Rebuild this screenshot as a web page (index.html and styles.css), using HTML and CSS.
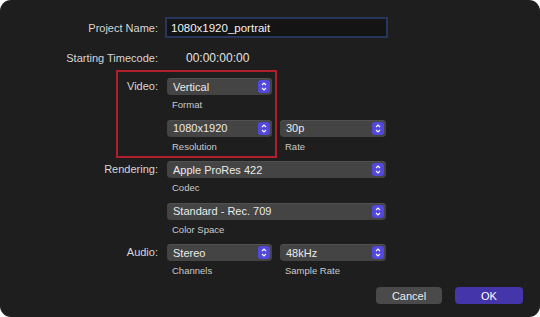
FILE: index.html
```html
<!DOCTYPE html>
<html lang="en">
<head>
    <meta charset="UTF-8">
    <meta name="viewport" content="width=device-width, initial-scale=1.0">
    <title>Project Settings</title>
    <link rel="stylesheet" href="styles.css">
</head>
<body>

<div class="dialog">
    <div class="row row-name">
        <label class="label">Project Name:</label>
        <input type="text" class="name-input" value="1080x1920_portrait">
    </div>

    <div class="row row-timecode">
        <span class="label">Starting Timecode:</span>
        <span class="timecode">00:00:00:00</span>
    </div>

    <div class="group">
        <span class="label">Video:</span>
        <div class="field">
            <div class="popup"><span>Vertical</span><span class="stepper"></span></div>
            <div class="sub">Format</div>
        </div>
    </div>

    <div class="group">
        <span class="label"></span>
        <div class="field">
            <div class="popup"><span>1080x1920</span><span class="stepper"></span></div>
            <div class="sub">Resolution</div>
        </div>
        <div class="field">
            <div class="popup"><span>30p</span><span class="stepper"></span></div>
            <div class="sub">Rate</div>
        </div>
    </div>

    <div class="group">
        <span class="label">Rendering:</span>
        <div class="field wide">
            <div class="popup"><span>Apple ProRes 422</span><span class="stepper"></span></div>
            <div class="sub">Codec</div>
        </div>
    </div>

    <div class="group">
        <span class="label"></span>
        <div class="field wide">
            <div class="popup"><span>Standard - Rec. 709</span><span class="stepper"></span></div>
            <div class="sub">Color Space</div>
        </div>
    </div>

    <div class="group">
        <span class="label">Audio:</span>
        <div class="field">
            <div class="popup"><span>Stereo</span><span class="stepper"></span></div>
            <div class="sub">Channels</div>
        </div>
        <div class="field">
            <div class="popup"><span>48kHz</span><span class="stepper"></span></div>
            <div class="sub">Sample Rate</div>
        </div>
    </div>

    <div class="buttons">
        <button class="btn btn-cancel">Cancel</button>
        <button class="btn btn-ok">OK</button>
    </div>

    <div class="highlight"></div>
</div>

</body>
</html>
```

FILE: styles.css
```css
body {
    margin: 0;
    padding: 0;
    background-color: #ffffff;
    font-family: "Liberation Sans", Arial, sans-serif;
}

.dialog {
    position: relative;
    width: 540px;
    height: 317px;
    box-sizing: border-box;
    padding-top: 17px;
    background-color: #1e1e1e;
    border-radius: 11px;
    overflow: hidden;
}

.row,
.group {
    display: grid;
    grid-template-columns: 159px 105px 106px;
    column-gap: 8px;
    align-items: start;
}

.label {
    color: #d6d6d6;
    font-size: 11px;
    line-height: 17px;
    text-align: right;
    padding-right: 1px;
}

.row-name {
    height: 21px;
    align-items: center;
}

.row-name .label {
    padding-top: 1px;
}

.name-input {
    grid-column: 2 / 4;
    margin-left: -2px;
    width: 223px;
    height: 21px;
    box-sizing: border-box;
    padding: 0 4px;
    background-color: #141414;
    border: 2px solid #26365c;
    color: #f2f2f2;
    font-family: "Liberation Sans", Arial, sans-serif;
    font-size: 11.5px;
    outline: none;
}

.row-timecode {
    margin-top: 12px;
    margin-bottom: 11px;
}

.timecode {
    grid-column: 2 / 4;
    padding-left: 19px;
    color: #e2e2e2;
    font-size: 12px;
    line-height: 17px;
}

.group {
    margin-bottom: 7.5px;
}

.field.wide {
    grid-column: 2 / 4;
}

.popup {
    display: flex;
    align-items: center;
    justify-content: space-between;
    height: 17px;
    box-sizing: border-box;
    padding: 0 2px 0 6px;
    background-color: #444444;
    border-radius: 4px;
    color: #eaeaea;
    font-size: 11px;
    box-shadow: inset 0 1px 0 #505050;
}

.stepper {
    width: 12px;
    height: 13px;
    border-radius: 3px;
    background-color: #5348dc;
    background-image: url("data:image/svg+xml;utf8,<svg xmlns='http://www.w3.org/2000/svg' width='12' height='13'><path d='M4 5 L6 3 L8 5 M4 8 L6 10 L8 8' fill='none' stroke='white' stroke-width='1.1'/></svg>");
}

.sub {
    padding: 2px 0 0 5px;
    color: #cacaca;
    font-size: 9.5px;
    line-height: 15px;
}

.buttons {
    display: flex;
    justify-content: flex-end;
    gap: 13px;
    padding-right: 17px;
    margin-top: 9px;
}

.btn {
    height: 17px;
    padding: 0;
    border: none;
    border-radius: 4px;
    color: #ececec;
    font-family: "Liberation Sans", Arial, sans-serif;
    font-size: 11px;
}

.btn-cancel {
    width: 66px;
    background-color: #4a4a4a;
}

.btn-ok {
    width: 68px;
    background-color: #4535aa;
    color: #ffffff;
}

.highlight {
    position: absolute;
    left: 116px;
    top: 70px;
    width: 161px;
    height: 88px;
    box-sizing: border-box;
    border: 2px solid #b01f2a;
}
```
